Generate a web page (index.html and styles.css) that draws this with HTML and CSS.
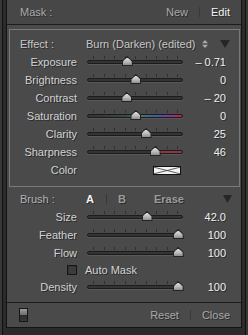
FILE: index.html
```html
<!DOCTYPE html>
<html>
<head>
<meta charset="utf-8">
<link rel="stylesheet" href="styles.css">
</head>
<body>
<div class="panel">
  <div class="header">
    <span class="title">Mask :</span>
    <span class="mode">New</span>
    <span class="sep"></span>
    <span class="mode active">Edit</span>
  </div>

  <div class="effect-box">
    <div class="effect-row">
      <span class="elabel">Effect :</span>
      <span class="evalue">Burn (Darken) (edited)</span>
      <svg class="updown" width="6" height="8" viewBox="0 0 6 8"><path d="M0 3.2L3 0L6 3.2Z M0 4.8L3 8L6 4.8Z" fill="#a8a8a8"/></svg>
      <svg class="disclosure" width="10" height="8" viewBox="0 0 10 8"><path d="M0 0H10L5 8Z" fill="#262626"/></svg>
    </div>
    <div class="row"><span class="label">Exposure</span><div class="slider"><div class="ticks"></div><div class="track"></div><div class="thumb" style="left:42%"></div></div><span class="value">– 0.71</span></div>
    <div class="row"><span class="label">Brightness</span><div class="slider"><div class="ticks"></div><div class="track"></div><div class="thumb" style="left:51%"></div></div><span class="value">0</span></div>
    <div class="row"><span class="label">Contrast</span><div class="slider"><div class="ticks"></div><div class="track"></div><div class="thumb" style="left:41.5%"></div></div><span class="value">– 20</span></div>
    <div class="row"><span class="label">Saturation</span><div class="slider"><div class="ticks"></div><div class="track track-sat"></div><div class="thumb" style="left:51%"></div></div><span class="value">0</span></div>
    <div class="row"><span class="label">Clarity</span><div class="slider"><div class="ticks"></div><div class="track"></div><div class="thumb" style="left:61.5%"></div></div><span class="value">25</span></div>
    <div class="row"><span class="label">Sharpness</span><div class="slider"><div class="ticks"></div><div class="track track-sharp"></div><div class="thumb" style="left:71%"></div></div><span class="value">46</span></div>
    <div class="row"><span class="label">Color</span><div class="swatch-cell"><svg class="swatch" width="28" height="9" viewBox="0 0 28 9"><rect x="0.5" y="0.5" width="27" height="8" fill="#f2f2f2" stroke="#111"/><path d="M1 1.2L14 4.5L27 1.2M1 7.8L14 4.5L27 7.8" stroke="#3a3a3a" stroke-width="0.8" fill="none"/></svg></div><span class="value"></span></div>
  </div>

  <div class="brush">
    <div class="brush-row">
      <span class="blabel">Brush :</span>
      <span class="bopt active">A</span>
      <span class="bsep"></span>
      <span class="bopt b">B</span>
      <span class="bopt erase">Erase</span>
      <svg class="bdisclosure" width="9" height="8" viewBox="0 0 9 8"><path d="M0 0H9L4.5 8Z" fill="#262626"/></svg>
    </div>
    <div class="row"><span class="label">Size</span><div class="slider"><div class="ticks"></div><div class="track"></div><div class="thumb" style="left:62.5%"></div></div><span class="value">42.0</span></div>
    <div class="row"><span class="label">Feather</span><div class="slider"><div class="ticks"></div><div class="track"></div><div class="thumb" style="left:95%"></div></div><span class="value">100</span></div>
    <div class="row"><span class="label">Flow</span><div class="slider"><div class="ticks"></div><div class="track"></div><div class="thumb" style="left:95%"></div></div><span class="value">100</span></div>
    <div class="auto-row"><span class="checkbox"></span><span class="auto-label">Auto Mask</span></div>
    <div class="row"><span class="label">Density</span><div class="slider"><div class="ticks"></div><div class="track"></div><div class="thumb" style="left:95%"></div></div><span class="value">100</span></div>
  </div>

  <div class="footer">
    <span class="switch"></span>
    <span class="fbtn reset">Reset</span>
    <span class="fsep"></span>
    <span class="fbtn">Close</span>
  </div>
</div>
</body>
</html>
```

FILE: styles.css
```css
* { box-sizing: border-box; }
html, body { margin: 0; padding: 0; }
body {
  width: 248px;
  height: 335px;
  overflow: hidden;
  background: linear-gradient(to right, #383838 0 2px, #121212 2px 3px, #2b2b2b 3px 245px, #121212 245px 246px, #383838 246px);
  font-family: "Liberation Sans", Arial, sans-serif;
  font-size: 11px;
  color: #cfcfcf;
}
.panel {
  margin: 0 6px;
  border: 1px solid #141414;
  border-top: none;
  background: #4a4a4a;
  height: 328px;
}

/* header */
.header {
  height: 25px;
  border-bottom: 1px solid #1c1c1c;
  display: flex;
  align-items: center;
  padding: 0 11px 0 13px;
  line-height: 24px;
  background: #474747;
}
.title { color: #a9a9a9; margin-right: auto; text-shadow: 1px 1px 0 #2c2c2c; }
.mode { color: #a9a9a9; text-shadow: 1px 1px 0 #2c2c2c; }
.mode.active { color: #f2f2f2; }
.sep { width: 1px; height: 10px; background: #393939; margin: 0 11px; }

/* effect box */
.effect-box {
  margin: 4px 1px 0 2px;
  border: 1px solid #7a7a7a;
  padding: 4px 0 7px;
}
.effect-row {
  height: 19px;
  display: flex;
  align-items: center;
  padding-left: 10px;
}
.elabel { width: 66px; color: #c6c6c6; text-shadow: 1px 1px 0 #2c2c2c; }
.evalue { color: #c6c6c6; text-shadow: 1px 1px 0 #2c2c2c; }
.updown { margin-left: 7px; }
.disclosure { margin-left: 12px; }

/* slider rows */
.row {
  height: 18px;
  display: flex;
  align-items: center;
}
.label {
  width: 67px;
  text-align: right;
  color: #d2d2d2;
  text-shadow: 1px 1px 0 #2a2a2a;
  line-height: 18px;
}
.value {
  width: 43px;
  text-align: right;
  color: #f0f0f0;
  line-height: 18px;
  text-shadow: 1px 1px 0 #2a2a2a;
}
.slider {
  position: relative;
  width: 96px;
  height: 18px;
  margin-left: 10px;
  padding-top: 3px;
}
.ticks {
  height: 3px;
  margin: 0 5px 0 6px;
  background: repeating-linear-gradient(to right, #303030 0 1px, transparent 1px 10.5px);
}
.track {
  margin-top: 1px;
  height: 4px;
  border: 1px solid #1c1c1c;
  border-radius: 3px;
  background: #343434;
  box-shadow: 0 1px 0 #585858;
}
.track-sat {
  background: linear-gradient(to right, #343434 0%, #3a4a42 40%, #3e7a60 56%, #3a5e9e 72%, #7a3c9e 86%, #b8283c 100%);
}
.track-sharp {
  background: linear-gradient(to right, #343434 0 71%, #8e3646 71%);
}
.thumb {
  position: absolute;
  top: 3px;
  width: 11px;
  height: 10px;
  margin-left: -5.5px;
  background: #242424;
  clip-path: polygon(50% 0, 78% 28%, 96% 50%, 100% 72%, 100% 100%, 0 100%, 0 72%, 4% 50%, 22% 28%);
}
.thumb::before {
  content: "";
  position: absolute;
  left: 1px; right: 1px; top: 1.5px; bottom: 1px;
  background: linear-gradient(#e2e2e2, #b4b4b4 60%, #8e8e8e);
  clip-path: polygon(50% 0, 78% 28%, 96% 50%, 100% 72%, 100% 100%, 0 100%, 0 72%, 4% 50%, 22% 28%);
}
.swatch-cell {
  width: 96px;
  margin-left: 10px;
  height: 18px;
  display: flex;
  align-items: center;
  padding-left: 66px;
}
.swatch { display: block; }

/* brush */
.brush {
  padding: 2px 0 6px 3px;
}
.brush-row {
  height: 19px;
  display: flex;
  align-items: center;
  padding-left: 10px;
}
.blabel { width: 66px; color: #b4b4b4; text-shadow: 1px 1px 0 #2c2c2c; }
.bopt { font-weight: bold; color: #9c9c9c; text-shadow: 1px 1px 0 #2c2c2c; }
.bopt.active { color: #f4f4f4; }
.bsep { width: 1px; height: 10px; background: #393939; margin: 0 11px 0 12px; }
.erase { margin-left: 28px; }
.bdisclosure { margin-left: 39px; }
.auto-row {
  height: 16px;
  display: flex;
  align-items: center;
}
.checkbox {
  width: 10px;
  height: 10px;
  margin-left: 57px;
  border: 1px solid #161616;
  background: #3c3c3c;
  box-shadow: inset 1px 1px 0 #333;
}
.auto-label { margin-left: 8px; color: #d2d2d2; text-shadow: 1px 1px 0 #2a2a2a; }

/* footer */
.footer {
  height: 25px;
  border-top: 1px solid #1c1c1c;
  display: flex;
  align-items: center;
  padding: 0 11px 0 12px;
}
.switch {
  width: 9px;
  height: 14px;
  border: 1px solid #161616;
  background: linear-gradient(#9e9e9e, #6c6c6c 50%, #2c2c2c 50%, #383838);
  margin-right: auto;
}
.fbtn { color: #a9a9a9; text-shadow: 1px 1px 0 #2c2c2c; }
.fsep { width: 1px; height: 10px; background: #393939; margin: 0 11px; }
```
